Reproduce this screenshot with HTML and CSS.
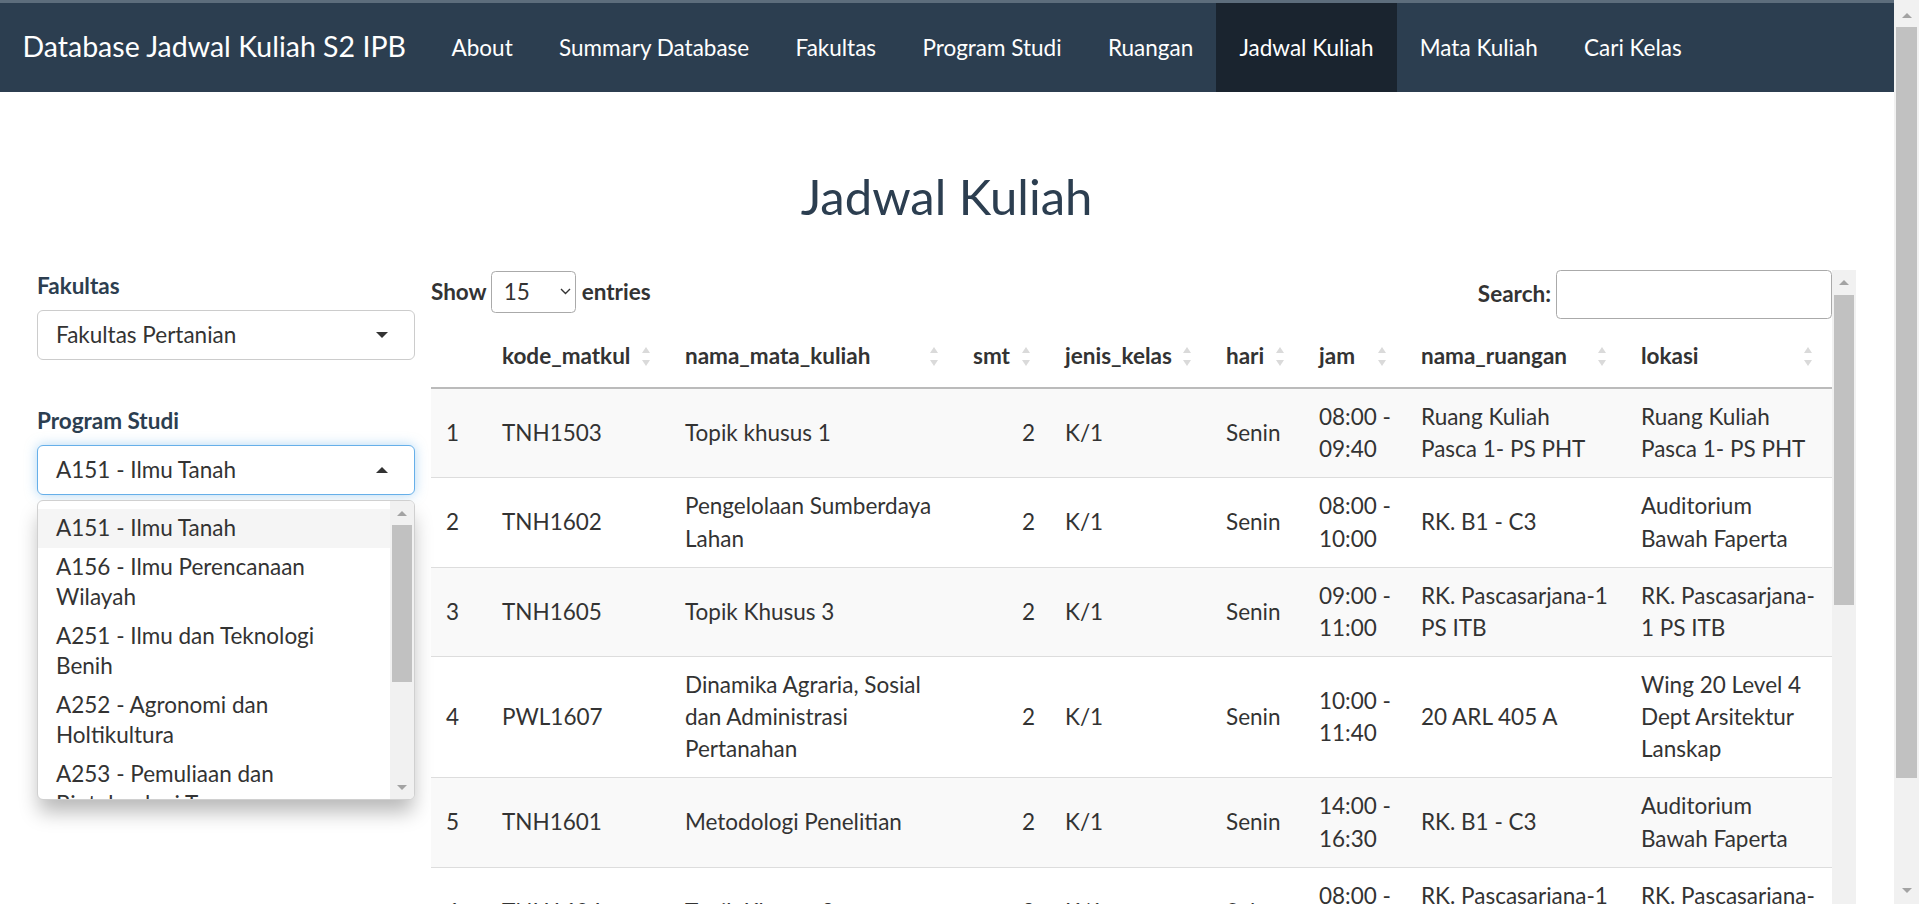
FILE: index.html
```html
<!DOCTYPE html>
<html lang="id">
<head>
<meta charset="utf-8">
<title>Database Jadwal Kuliah S2 IPB</title>
<link rel="stylesheet" href="styles.css">
</head>
<body>
<div class="viewport">
<nav class="navbar">
  <span class="brand">Database Jadwal Kuliah S2 IPB</span>
  <ul class="nav">
    <li><a href="#">About</a></li>
    <li><a href="#">Summary Database</a></li>
    <li><a href="#">Fakultas</a></li>
    <li><a href="#">Program Studi</a></li>
    <li><a href="#">Ruangan</a></li>
    <li class="active"><a href="#">Jadwal Kuliah</a></li>
    <li><a href="#">Mata Kuliah</a></li>
    <li><a href="#">Cari Kelas</a></li>
  </ul>
</nav>

<div class="page">
  <h2 class="title">Jadwal Kuliah</h2>
  <div class="layout">
    <aside class="sidebar">
      <div class="field">
        <label class="field-label">Fakultas</label>
        <div class="sel"><span>Fakultas Pertanian</span><i class="caret"></i></div>
      </div>
      <div class="field field-gap">
        <label class="field-label">Program Studi</label>
        <div class="sel focus"><span>A151 - Ilmu Tanah</span><i class="caret up"></i></div>
        <div class="dropdown">
          <div class="dropdown-content">
            <div class="opt active">A151 - Ilmu Tanah</div>
            <div class="opt">A156 - Ilmu Perencanaan Wilayah</div>
            <div class="opt">A251 - Ilmu dan Teknologi Benih</div>
            <div class="opt">A252 - Agronomi dan Holtikultura</div>
            <div class="opt">A253 - Pemuliaan dan Bioteknologi Tanaman</div>
            <div class="opt">A351 - Entomologi</div>
            <div class="opt">A352 - Fitopatologi</div>
            <div class="opt">A451 - Arsitektur Lanskap</div>
            <div class="opt">A551 - Agribisnis</div>
          </div>
          <div class="vscroll dd-sb"><span class="sb-btn up"></span><span class="sb-thumb"></span><span class="sb-track"></span><span class="sb-btn down"></span></div>
        </div>
      </div>
    </aside>

    <main class="main">
      <div class="dt-area">
      <div class="dt-scroll">
        <div class="dt-top">
          <div class="len">Show <span class="len-select"><span>15</span><svg width="11" height="7" viewBox="0 0 11 7"><path d="M1 1l4.5 4.5L10 1" fill="none" stroke="#333" stroke-width="1.4"/></svg></span> entries</div>
          <div class="filter">Search:<input class="search" type="search" aria-label="Search"></div>
        </div>
        <table class="dt">
          <colgroup>
            <col style="width:56px"><col style="width:183px"><col style="width:288px"><col style="width:92px"><col style="width:161px"><col style="width:93px"><col style="width:102px"><col style="width:220px"><col style="width:206px">
          </colgroup>
          <thead>
            <tr>
              <th></th>
              <th><div class="th-in"><span>kode_matkul</span><i class="sort"></i></div></th>
              <th><div class="th-in"><span>nama_mata_kuliah</span><i class="sort"></i></div></th>
              <th><div class="th-in"><span>smt</span><i class="sort"></i></div></th>
              <th><div class="th-in"><span>jenis_kelas</span><i class="sort"></i></div></th>
              <th><div class="th-in"><span>hari</span><i class="sort"></i></div></th>
              <th><div class="th-in"><span>jam</span><i class="sort"></i></div></th>
              <th><div class="th-in"><span>nama_ruangan</span><i class="sort"></i></div></th>
              <th><div class="th-in"><span>lokasi</span><i class="sort"></i></div></th>
            </tr>
          </thead>
          <tbody>
            <tr class="odd"><td>1</td><td>TNH1503</td><td>Topik khusus 1</td><td class="num">2</td><td>K/1</td><td>Senin</td><td>08:00 - 09:40</td><td>Ruang Kuliah Pasca 1- PS PHT</td><td>Ruang Kuliah Pasca 1- PS PHT</td></tr>
            <tr><td>2</td><td>TNH1602</td><td>Pengelolaan Sumberdaya Lahan</td><td class="num">2</td><td>K/1</td><td>Senin</td><td>08:00 - 10:00</td><td>RK. B1 - C3</td><td>Auditorium Bawah Faperta</td></tr>
            <tr class="odd"><td>3</td><td>TNH1605</td><td>Topik Khusus 3</td><td class="num">2</td><td>K/1</td><td>Senin</td><td>09:00 - 11:00</td><td>RK. Pascasarjana-1 PS ITB</td><td>RK. Pascasarjana-1 PS ITB</td></tr>
            <tr><td>4</td><td>PWL1607</td><td>Dinamika Agraria, Sosial dan Administrasi Pertanahan</td><td class="num">2</td><td>K/1</td><td>Senin</td><td>10:00 - 11:40</td><td>20 ARL 405 A</td><td>Wing 20 Level 4 Dept Arsitektur Lanskap</td></tr>
            <tr class="odd"><td>5</td><td>TNH1601</td><td>Metodologi Penelitian</td><td class="num">2</td><td>K/1</td><td>Senin</td><td>14:00 - 16:30</td><td>RK. B1 - C3</td><td>Auditorium Bawah Faperta</td></tr>
            <tr><td>6</td><td>TNH1604</td><td>Topik Khusus 2</td><td class="num">2</td><td>K/1</td><td>Selasa</td><td>08:00 - 10:00</td><td>RK. Pascasarjana-1 PS ITB</td><td>RK. Pascasarjana-1 PS ITB</td></tr>
            <tr class="odd"><td>7</td><td>TNH1606</td><td>Kesuburan Tanah Lanjut</td><td class="num">2</td><td>K/1</td><td>Selasa</td><td>10:00 - 11:40</td><td>RK. B1 - C3</td><td>Auditorium Bawah Faperta</td></tr>
            <tr><td>8</td><td>TNH1607</td><td>Fisika Tanah Lanjut</td><td class="num">2</td><td>K/1</td><td>Selasa</td><td>13:00 - 14:40</td><td>RK. Pascasarjana-1 PS ITB</td><td>RK. Pascasarjana-1 PS ITB</td></tr>
            <tr class="odd"><td>9</td><td>TNH1608</td><td>Kimia Tanah Lanjut</td><td class="num">3</td><td>K/1</td><td>Rabu</td><td>08:00 - 10:30</td><td>RK. B1 - C3</td><td>Auditorium Bawah Faperta</td></tr>
            <tr><td>10</td><td>TNH1609</td><td>Biologi Tanah Lanjut</td><td class="num">2</td><td>K/1</td><td>Rabu</td><td>13:00 - 14:40</td><td>RK. Pascasarjana-1 PS ITB</td><td>RK. Pascasarjana-1 PS ITB</td></tr>
          </tbody>
        </table>
      </div>
      <div class="vscroll dt-sb"><span class="sb-btn up"></span><span class="sb-thumb"></span><span class="sb-track"></span><span class="sb-btn down"></span></div>
      </div>
    </main>
  </div>
</div>
</div>
<div class="vscroll page-sb"><span class="sb-btn up"></span><span class="sb-thumb"></span><span class="sb-track"></span><span class="sb-btn down"></span></div>
</body>
</html>
```

FILE: styles.css
```css
* { box-sizing: border-box; }

html, body { height: 904px; overflow: hidden; }

body {
  margin: 0;
  display: flex;
  font-family: Lato, "Open Sans", "Liberation Sans", sans-serif;
  font-size: 22.5px;
  line-height: 1.428571;
  color: #2c3e50;
  background: #fff;
}

.viewport {
  flex: 1;
  min-width: 0;
  height: 904px;
  overflow: hidden;
}

/* ---------- scrollbars (Windows style) ---------- */
.vscroll {
  display: flex;
  flex-direction: column;
  flex: none;
  background: #f1f1f1;
}
.sb-btn {
  flex: none;
  display: flex;
  align-items: center;
  justify-content: center;
}
.sb-btn::before {
  content: "";
  width: 0;
  height: 0;
  border-left: 5px solid transparent;
  border-right: 5px solid transparent;
}
.sb-btn.up::before { border-bottom: 5px solid #a3a3a3; }
.sb-btn.down::before { border-top: 5px solid #a3a3a3; }
.sb-thumb {
  flex: none;
  margin: 0 2px;
  background: #c1c1c1;
}
.sb-track { flex: 1; }

.page-sb { width: 25px; height: 904px; }
.page-sb .sb-btn { height: 27px; }
.page-sb .sb-btn.up { padding-top: 4px; }
.page-sb .sb-thumb { height: 751px; }

.dt-sb { width: 24px; }
.dt-sb .sb-btn { height: 25px; }
.dt-sb .sb-thumb { height: 310px; }

.dd-sb { width: 24px; }
.dd-sb .sb-btn { height: 24px; }
.dd-sb .sb-thumb { height: 157px; }

/* ---------- navbar ---------- */
.navbar {
  display: flex;
  height: 92px;
  background: #2c3e50;
  border-top: 3px solid #5d6d7c;
}
.brand {
  padding: 27px 22.5px 0;
  font-size: 28.5px;
  line-height: 32px;
  color: #fff;
  white-space: nowrap;
}
.nav {
  display: flex;
  list-style: none;
  margin: 0;
  padding: 0;
}
.nav li { display: flex; }
.nav a {
  padding: 29px 23.15px 0;
  line-height: 32px;
  color: #fff;
  text-decoration: none;
  white-space: nowrap;
}
.nav .active a { background: #1a242f; }

/* ---------- page ---------- */
.page { padding: 0 38px 25px 37px; }
.title {
  margin: 78px 0 0;
  text-align: center;
  font-size: 49px;
  line-height: 52.8px;
  font-weight: 400;
  color: #2c3e50;
}
.layout {
  display: flex;
  align-items: flex-start;
  gap: 16px;
  margin-top: 47.2px;
}

/* ---------- sidebar ---------- */
.sidebar { width: 378px; flex: none; }
.field-gap { margin-top: 45px; }
.field-label {
  display: block;
  font-weight: 700;
  margin-bottom: 8px;
}
.sel {
  height: 50px;
  border: 1px solid #ccc;
  border-radius: 6px;
  display: flex;
  align-items: center;
  justify-content: space-between;
  padding: 0 26px 0 18px;
  line-height: 30px;
  color: #333;
  background: #fff;
}
.sel.focus {
  border-color: #66afe9;
  box-shadow: 0 0 12px rgba(102, 175, 233, .5);
}
.caret {
  width: 0;
  height: 0;
  border-left: 6px solid transparent;
  border-right: 6px solid transparent;
  border-top: 6px solid #333;
}
.caret.up {
  border-top: 0;
  border-bottom: 6px solid #333;
}
.dropdown {
  display: flex;
  margin-top: 5px;
  border: 1px solid #d0d0d0;
  border-radius: 6px;
  background: #fff;
  box-shadow: 0 14px 20px -2px rgba(0, 0, 0, .28);
  overflow: hidden;
}
.dropdown-content {
  flex: 1;
  min-width: 0;
  height: 298px;
  overflow: hidden;
  padding: 7.5px 0;
}
.opt {
  padding: 4.5px 30px 4.5px 18px;
  line-height: 30px;
  color: #333;
}
.opt.active { background: #f5f5f5; }

/* ---------- datatable ---------- */
.main { flex: 1; min-width: 0; }
.dt-area {
  display: flex;
  height: 733px;
}
.dt-scroll {
  flex: 1;
  min-width: 0;
  overflow: hidden;
  color: #333;
}
.dt-top {
  display: flex;
  justify-content: space-between;
  align-items: flex-start;
  height: 49px;
  font-weight: 700;
}
.len, .filter { display: flex; align-items: center; }
.len { margin-top: 1px; }
.len-select {
  width: 85px;
  height: 42px;
  margin: 0 6px 0 4px;
  border: 1px solid #aaa;
  border-radius: 4.5px;
  display: flex;
  align-items: center;
  justify-content: space-between;
  padding: 0 4px 0 12px;
  font-weight: 400;
}
.search {
  width: 276px;
  height: 49px;
  margin-left: 5px;
  border: 1px solid #aaa;
  border-radius: 4.5px;
  font: inherit;
  padding: 0 8px;
}
.dt {
  width: 1401px;
  table-layout: fixed;
  border-collapse: separate;
  border-spacing: 0;
  margin-top: 6px;
}
.dt th {
  text-align: left;
  font-weight: 700;
  padding: 15px 20px 15px 15px;
  border-bottom: 2px solid #bbb;
  white-space: nowrap;
}
.th-in {
  display: flex;
  align-items: center;
  justify-content: space-between;
}
.sort {
  display: flex;
  flex-direction: column;
  gap: 7px;
  flex: none;
}
.sort::before, .sort::after {
  content: "";
  width: 0;
  height: 0;
  border-left: 4px solid transparent;
  border-right: 4px solid transparent;
}
.sort::before { border-bottom: 6px solid #dadada; }
.sort::after { border-top: 6px solid #dadada; }
.dt td {
  padding: 12px 15px;
  border-top: 1px solid #ddd;
  vertical-align: middle;
}
.dt tbody tr:first-child td { border-top: 0; }
.dt tr.odd td { background: #f9f9f9; }
.dt td.num { text-align: right; }
```
